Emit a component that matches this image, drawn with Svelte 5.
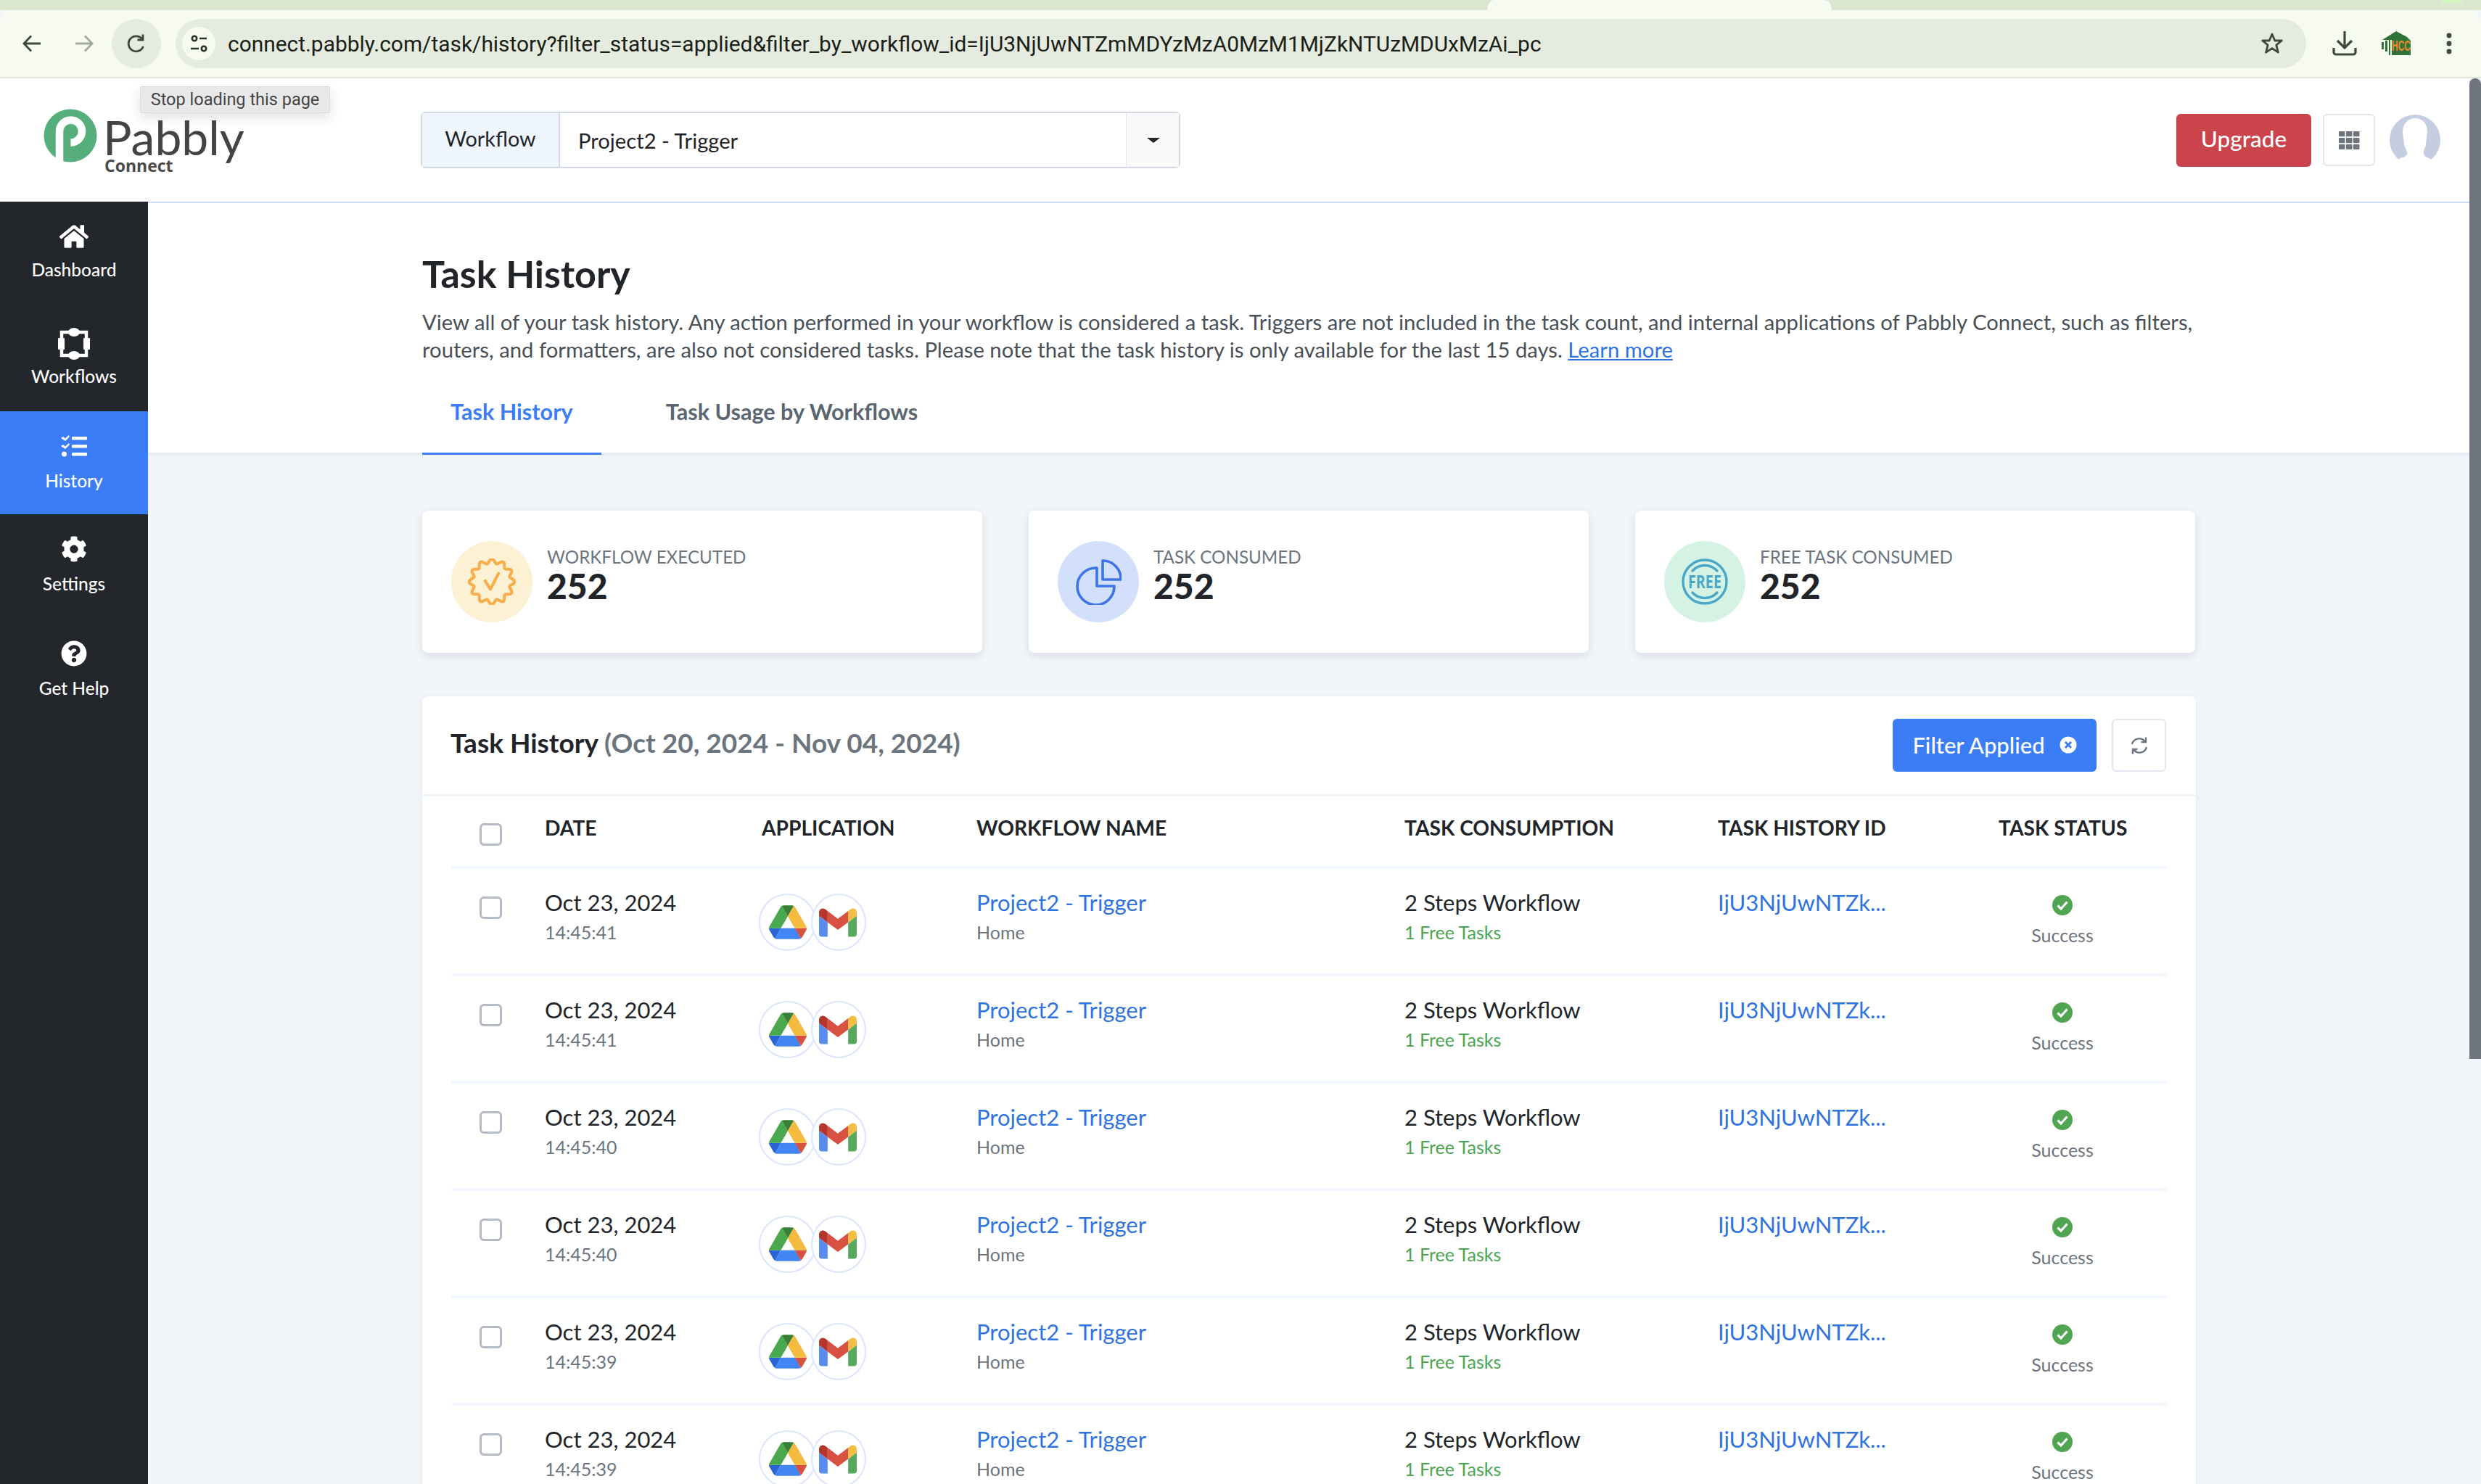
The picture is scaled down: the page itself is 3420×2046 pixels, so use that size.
<script>
  const rows = [
    `14:45:41`,
    `14:45:41`,
    `14:45:40`,
    `14:45:40`,
    `14:45:39`,
    `14:45:39`,
  ]

  const cards = [
    { label: `WORKFLOW EXECUTED`, value: `252`, kind: `badge` },
    { label: `TASK CONSUMED`, value: `252`, kind: `pie` },
    { label: `FREE TASK CONSUMED`, value: `252`, kind: `free` },
  ]

  const nav = [
    { label: `Dashboard`, icon: `home` },
    { label: `Workflows`, icon: `flow` },
    { label: `History`, icon: `tasks`, active: true },
    { label: `Settings`, icon: `cog` },
    { label: `Get Help`, icon: `help` },
  ]

  // wavy seal outline for the first card
  function seal(cx, cy, r, lobes, depth) {
    let d = ``
    const n = lobes * 8
    for (let i = 0; i <= n; i++) {
      const a = (i / n) * Math.PI * 2 - Math.PI / 2
      const rad = r + depth * Math.cos(lobes * a)
      d += `${i ? `L` : `M`}${(cx + rad * Math.cos(a)).toFixed(2)} ${(cy + rad * Math.sin(a)).toFixed(2)}`
    }
    return d + `Z`
  }
  const seal_path = seal(32, 31, 27.5, 12, 3)
</script>

<div class="window">
  <div class="tabstrip">
    <div class="active-tab"></div>
    <div class="tab-gap"></div>
    <div class="tab-dot"></div>
  </div>

  <div class="toolbar">
    <button class="tool" aria-label="back">
      <svg width="28" height="28" viewBox="0 0 28 28" fill="none" stroke="#3c4a38" stroke-width="2.8"><path d="M26 14H3M13 3.500 3 14l10 10.500"/></svg>
    </button>
    <button class="tool" aria-label="forward">
      <svg width="28" height="28" viewBox="0 0 28 28" fill="none" stroke="#a3aa9d" stroke-width="2.8"><path d="M2 14h23M15 3.500 25 14 15 24.500"/></svg>
    </button>
    <button class="tool reload" aria-label="reload">
      <svg width="30" height="30" viewBox="0 0 30 30" fill="none" stroke="#3c4a38" stroke-width="2.800"><path d="M24.500 19a10.500 10.500 0 1 1-1.800-10.500"/><path d="M24 2.500v7.500h-7.500" /></svg>
    </button>
    <div class="omnibox">
      <span class="tune">
        <svg width="26" height="26" viewBox="0 0 26 26" fill="none" stroke="#2b3428" stroke-width="2.600"><circle cx="7" cy="6" r="3.200"/><path d="M14 6h10M2 20h11"/><circle cx="20" cy="20" r="3.200"/></svg>
      </span>
      <span class="url">connect.pabbly.com/task/history?filter_status=applied&amp;filter_by_workflow_id=IjU3NjUwNTZmMDYzMzA0MzM1MjZkNTUzMDUxMzAi_pc</span>
      <svg class="star" width="32" height="32" viewBox="0 0 32 32" fill="none" stroke="#3c4a38" stroke-width="2.800" stroke-linejoin="round"><path d="m16 3 3.800 9h9.500l-7.500 6.200 2.600 10L16 22.600 7.600 28.200l2.600-10L2.700 12h9.500z"/></svg>
    </div>
    <div class="extras">
      <svg width="34" height="36" viewBox="0 0 34 36" fill="none" stroke="#3c4a38" stroke-width="3.200"><path d="M17 1v23M7 14l10 10 10-10"/><path d="M2 24v6a3 3 0 0 0 3 3h24a3 3 0 0 0 3-3v-6"/></svg>
      <svg class="hcc" width="42" height="36" viewBox="0 0 42 36" aria-label="HCC">
        <path d="M2 13 21 1l15 8 5 5v20H15V13z" fill="#2f7236"/>
        <path d="M1 16h3v10H1zM6 14h3v15H6zM11 13h2v21h-2z" fill="#2f7236"/>
        <text x="15" y="28" class="hcc-text" textLength="26" lengthAdjust="spacingAndGlyphs">HCC</text>
      </svg>
      <svg width="10" height="32" viewBox="0 0 10 32" fill="#3c4a38"><circle cx="5" cy="5" r="3.400"/><circle cx="5" cy="16" r="3.400"/><circle cx="5" cy="27" r="3.400"/></svg>
    </div>
  </div>

  <div class="viewport">
    <div class="page">
      <header class="appbar">
        <div class="logo">
          <svg width="74" height="74" viewBox="0 0 74 74">
            <circle cx="37" cy="37" r="36.500" fill="#55ae7c"/>
            <path d="M22 74V31a15.500 15.500 0 1 1 15.500 15.500" fill="none" stroke="#fff" stroke-width="10.500"/>
          </svg>
          <div class="wordmark">
            <span class="pabbly">Pabbly</span>
            <span class="connect">Connect</span>
          </div>
        </div>
        <div class="picker">
          <span class="picker-label">Workflow</span>
          <span class="picker-value">Project2 - Trigger</span>
          <span class="picker-caret"><i></i></span>
        </div>
        <div class="appbar-right">
          <button class="upgrade">Upgrade</button>
          <button class="apps" aria-label="apps">
            <svg width="29" height="25" viewBox="0 0 29 25" fill="#6f757e">
              {#each [0, 10, 20] as x}
                {#each [0, 9, 18] as y}
                  <rect {x} {y} width="8.500" height="7.200" rx="1"/>
                {/each}
              {/each}
            </svg>
          </button>
          <svg class="avatar" width="70" height="70" viewBox="0 0 70 70">
            <circle cx="35" cy="35" r="35" fill="#c5cde0"/>
            <path d="M11 64c2-6 12-4 13-10 1-5-4-8-4-14l-2-16C18 12 26 5 35 5c10 0 17 7 17 19l-2 16c0 6-4 9-3 14 1 6 10 5 12 10-8 5-19 7-30 6-8 0-15-2-18-6z" fill="#fff"/>
          </svg>
        </div>
      </header>

      <div class="body">
        <nav class="sidebar">
          {#each nav as item}
            <div class="nav-item" class:active={item.active}>
              <span class="nav-icon">
                {#if item.icon === `home`}
                  <svg width="42" height="36" viewBox="0 0 576 512" fill="#fff"><path d="M280.370 148.260L96 300.110V464a16 16 0 0 0 16 16l112.060-.29a16 16 0 0 0 15.920-16V368a16 16 0 0 1 16-16h64a16 16 0 0 1 16 16v95.640a16 16 0 0 0 16 16.050L464 480a16 16 0 0 0 16-16V300L295.670 148.260a12.190 12.190 0 0 0-15.300 0zM571.600 251.470L488 182.560V44.050a12 12 0 0 0-12-12h-56a12 12 0 0 0-12 12v72.610L318.470 43a48 48 0 0 0-61 0L4.340 251.470a12 12 0 0 0-1.600 16.900l25.500 31A12 12 0 0 0 45.150 301l235.220-193.740a12.190 12.190 0 0 1 15.300 0L530.900 301a12 12 0 0 0 16.900-1.600l25.500-31a12 12 0 0 0-1.700-16.930z"/></svg>
                {:else if item.icon === `flow`}
                  <svg width="44" height="44" viewBox="0 0 44 44"><rect x="5" y="6" width="34" height="32" fill="none" stroke="#fff" stroke-width="4.500"/><ellipse cx="22" cy="6" rx="8" ry="6" fill="#fff"/><ellipse cx="22" cy="38" rx="8" ry="6" fill="#fff"/><rect x="0" y="14" width="9" height="16" rx="1" fill="#fff"/><rect x="35" y="14" width="9" height="16" rx="1" fill="#fff"/></svg>
                {:else if item.icon === `tasks`}
                  <svg width="36" height="30" viewBox="0 0 36 30" fill="#fff"><path d="M0 4l3-2 3 2.500L10.500 0 12 2 6 8zM0 15l3-2 3 2.500L10.500 11 12 13l-6 6z"/><circle cx="4.500" cy="26" r="3.500"/><rect x="15" y="2" width="21" height="4.500" rx="1"/><rect x="15" y="13" width="21" height="4.500" rx="1"/><rect x="15" y="24" width="21" height="4.500" rx="1"/></svg>
                {:else if item.icon === `cog`}
                  <svg width="36" height="36" viewBox="0 0 512 512" fill="#fff"><path d="M487.400 315.700l-42.600-24.600c4.300-23.200 4.300-47 0-70.200l42.600-24.600c4.900-2.800 7.100-8.600 5.500-14-11.100-35.600-30-67.800-54.700-94.600-3.800-4.100-10-5.100-14.800-2.300L380.800 110c-17.900-15.400-38.500-27.300-60.800-35.100V25.800c0-5.600-3.900-10.500-9.400-11.700-36.700-8.200-74.300-7.800-109.200 0-5.500 1.200-9.400 6.100-9.400 11.700V75c-22.200 7.900-42.800 19.800-60.800 35.100L88.700 85.500c-4.900-2.800-11-1.900-14.800 2.300-24.700 26.700-43.600 58.900-54.700 94.600-1.700 5.400.6 11.200 5.500 14L67.300 221c-4.300 23.200-4.300 47 0 70.200l-42.600 24.600c-4.900 2.800-7.100 8.600-5.500 14 11.100 35.600 30 67.800 54.700 94.600 3.800 4.100 10 5.100 14.800 2.300l42.600-24.600c17.900 15.400 38.500 27.300 60.800 35.100v49.200c0 5.600 3.900 10.500 9.400 11.700 36.700 8.200 74.300 7.800 109.200 0 5.500-1.200 9.400-6.100 9.400-11.700v-49.200c22.200-7.900 42.800-19.800 60.800-35.100l42.600 24.600c4.900 2.800 11 1.900 14.800-2.300 24.700-26.700 43.600-58.900 54.700-94.600 1.500-5.500-.7-11.300-5.600-14.100zM256 336c-44.100 0-80-35.900-80-80s35.900-80 80-80 80 35.900 80 80-35.900 80-80 80z"/></svg>
                {:else}
                  <svg width="36" height="36" viewBox="0 0 512 512" fill="#fff"><path d="M504 256c0 136.997-111.043 248-248 248S8 392.997 8 256C8 119.083 119.043 8 256 8s248 111.083 248 248zM262.655 90c-54.497 0-89.255 22.957-116.549 63.758-3.536 5.286-2.353 12.415 2.715 16.258l34.699 26.310c5.205 3.947 12.621 3.008 16.665-2.122 17.864-22.658 30.113-35.797 57.303-35.797 20.429 0 45.698 13.148 45.698 32.958 0 14.976-12.363 22.667-32.534 33.976C247.128 238.528 216 254.941 216 296v4c0 6.627 5.373 12 12 12h56c6.627 0 12-5.373 12-12v-1.333c0-28.462 83.186-29.647 83.186-106.667 0-58.002-60.165-102-116.531-102zM256 338c-25.365 0-46 20.635-46 46 0 25.364 20.635 46 46 46s46-20.636 46-46c0-25.365-20.635-46-46-46z"/></svg>
                {/if}
              </span>
              <span class="nav-label">{item.label}</span>
            </div>
          {/each}
        </nav>

        <main class="content">
          <section class="intro">
            <h1>Task History</h1>
            <p>View all of your task history. Any action performed in your workflow is considered a task. Triggers are not included in the task count, and internal applications of Pabbly Connect, such as filters, routers, and formatters, are also not considered tasks. Please note that the task history is only available for the last 15 days. <a href="#top">Learn more</a></p>
            <div class="tabs">
              <span class="tab on">Task History</span>
              <span class="tab">Task Usage by Workflows</span>
            </div>
          </section>

          <section class="stage">
            <div class="cards">
              {#each cards as card}
                <div class="card">
                  <span class="bubble {card.kind}">
                    {#if card.kind === `badge`}
                      <svg width="66" height="64" viewBox="0 0 64 62" fill="none" stroke="#f8ae4a" stroke-width="4" stroke-linejoin="round" stroke-linecap="round">
                        <path d={seal_path}/>
                        <path d="M23 30l7 11 11-21"/>
                      </svg>
                    {:else if card.kind === `pie`}
                      <svg width="64" height="64" viewBox="0 0 64 64" fill="none" stroke="#3e74e5" stroke-width="3.600" stroke-linejoin="round">
                        <path d="M30 13a25.500 25.500 0 1 0 24 25H30z"/>
                        <path d="M38 3a25 25 0 0 1 25 26H38z"/>
                      </svg>
                    {:else}
                      <svg width="64" height="64" viewBox="0 0 64 64" fill="none" stroke="#4ba7c8" stroke-width="3.400" stroke-linecap="round">
                        <circle cx="32" cy="32" r="30"/>
                        <path d="M15 17a23 23 0 0 1 34 0M15 47a23 23 0 0 0 34 0"/>
                        <text x="9" y="41" class="free-text" textLength="46" lengthAdjust="spacingAndGlyphs">FREE</text>
                      </svg>
                    {/if}
                  </span>
                  <div class="card-text">
                    <span class="card-label">{card.label}</span>
                    <span class="card-value">{card.value}</span>
                  </div>
                </div>
              {/each}
            </div>

            <div class="panel">
              <div class="panel-head">
                <h2>Task History <span>(Oct 20, 2024 - Nov 04, 2024)</span></h2>
                <button class="filter">
                  Filter Applied
                  <svg width="24" height="24" viewBox="0 0 24 24"><circle cx="12" cy="12" r="11.500" fill="#fff"/><path d="M8 8l8 8M16 8l-8 8" stroke="#3b7cf7" stroke-width="3"/></svg>
                </button>
                <button class="refresh" aria-label="refresh">
                  <svg width="24" height="26" viewBox="0 0 24 26" fill="none" stroke="#6f757e" stroke-width="2.400"><path d="M2 11a10 9.500 0 0 1 18-3.500"/><path d="M21 1.500V8h-6.500"/><path d="M22 15a10 9.500 0 0 1-18 3.500"/><path d="M3 24.500V18h6.500"/></svg>
                </button>
              </div>

              <div class="grid head">
                <span class="cell-check"><i class="check"></i></span>
                <span>DATE</span>
                <span>APPLICATION</span>
                <span>WORKFLOW NAME</span>
                <span>TASK CONSUMPTION</span>
                <span>TASK HISTORY ID</span>
                <span class="center">TASK STATUS</span>
              </div>

              {#each rows as time}
                <div class="grid row">
                  <span class="cell-check"><i class="check"></i></span>
                  <div>
                    <div class="main-line">Oct 23, 2024</div>
                    <div class="sub-line">{time}</div>
                  </div>
                  <div class="apps-cell">
                    <span class="app-ring">
                      <svg width="52" height="47" viewBox="0 0 87.300 78">
                        <path d="m6.600 66.850 3.850 6.650c.8 1.400 1.950 2.500 3.300 3.300l13.750-23.800h-27.500c0 1.550.4 3.100 1.200 4.500z" fill="#2a64d3"/>
                        <path d="m43.650 25-13.750-23.800c-1.350.8-2.500 1.900-3.300 3.300l-25.400 44a9.060 9.060 0 0 0 -1.200 4.500h27.500z" fill="#4aa84f"/>
                        <path d="m73.550 76.800c1.350-.8 2.500-1.900 3.300-3.300l1.600-2.750 7.650-13.250c.8-1.400 1.200-2.950 1.200-4.500h-27.502l5.852 11.500z" fill="#d85140"/>
                        <path d="m43.650 25 13.750-23.800c-1.350-.8-2.900-1.200-4.500-1.200h-18.500c-1.600 0-3.150.45-4.500 1.200z" fill="#388035"/>
                        <path d="m59.800 53h-32.300l-13.750 23.800c1.350.8 2.900 1.200 4.500 1.200h50.800c1.600 0 3.150-.45 4.500-1.200z" fill="#4285f4"/>
                        <path d="m73.400 26.500-12.700-22c-.8-1.400-1.950-2.500-3.300-3.300l-13.750 23.800 16.150 28h27.450c0-1.550-.4-3.100-1.200-4.500z" fill="#f5bb3f"/>
                      </svg>
                    </span>
                    <span class="app-ring second">
                      <svg width="52" height="40" viewBox="52 42 88 66">
                        <path fill="#5a8cef" d="M58 108h14V74L52 59v43c0 3.320 2.690 6 6 6"/>
                        <path fill="#57a95e" d="M120 108h14c3.320 0 6-2.690 6-6V59l-20 15"/>
                        <path fill="#f3bf42" d="M120 48v26l20-15v-8c0-7.420-8.470-11.650-14.400-7.200"/>
                        <path fill="#d95142" d="M72 74V48l24 18 24-18v26L96 92"/>
                        <path fill="#b5352a" d="M52 51v8l20 15V48l-5.600-4.200c-5.940-4.450-14.400-.22-14.400 7.200"/>
                      </svg>
                    </span>
                  </div>
                  <div>
                    <div class="main-line link">Project2 - Trigger</div>
                    <div class="sub-line">Home</div>
                  </div>
                  <div>
                    <div class="main-line">2 Steps Workflow</div>
                    <div class="sub-line green">1 Free Tasks</div>
                  </div>
                  <div>
                    <div class="main-line link">IjU3NjUwNTZk...</div>
                  </div>
                  <div class="status">
                    <svg width="28" height="28" viewBox="0 0 28 28"><circle cx="14" cy="14" r="14" fill="#4fa552"/><path d="M7.500 14.500l4.500 4.500 8.500-9.500" fill="none" stroke="#fff" stroke-width="3.200"/></svg>
                    <span>Success</span>
                  </div>
                </div>
              {/each}
            </div>
          </section>
        </main>
      </div>
    </div>
    <div class="scrollbar"><div class="thumb"></div></div>
  </div>

  <div class="tooltip">Stop loading this page</div>
</div>

<style>
  :global(body) {
    margin: 0;
    background: #f2f6fa;
  }
  .window {
    position: relative;
    width: 3420px;
    height: 2046px;
    overflow: hidden;
    display: flex;
    flex-direction: column;
    font-family: Lato, "Liberation Sans", sans-serif;
    color: #212529;
  }
  button {
    font-family: inherit;
    border: 0;
    padding: 0;
    background: none;
  }

  /* browser chrome */
  .tabstrip {
    height: 14px;
    flex: none;
    display: flex;
    background: #dbe6cf;
  }
  .active-tab {
    width: 475px;
    margin-left: 2050px;
    background: #f7faf0;
    border-radius: 10px 10px 0 0 / 14px 14px 0 0;
  }
  .tab-gap {
    width: 840px;
  }
  .tab-dot {
    width: 30px;
    height: 4px;
    background: #d3f5c2;
    border-radius: 0 0 8px 8px;
  }
  .toolbar {
    height: 92px;
    flex: none;
    box-sizing: content-box;
    display: flex;
    align-items: center;
    background: #f7faf0;
    border-bottom: 2px solid #e1e5da;
    border-radius: 14px 14px 0 0 / 18px 18px 0 0;
    padding-left: 30px;
  }
  .tool {
    width: 28px;
    height: 68px;
    display: flex;
    align-items: center;
    justify-content: center;
    margin-right: 44px;
  }
  .tool.reload {
    width: 68px;
    margin-left: -20px;
    margin-right: 20px;
    border-radius: 50%;
    background: #e5ebdf;
  }
  .omnibox {
    width: 2937px;
    height: 68px;
    flex: none;
    display: flex;
    align-items: center;
    background: #e5ebdf;
    border-radius: 34px;
    padding-left: 9px;
    box-sizing: border-box;
  }
  .tune {
    width: 46px;
    height: 46px;
    border-radius: 50%;
    background: #f7faf0;
    display: flex;
    align-items: center;
    justify-content: center;
    flex: none;
  }
  .url {
    margin-left: 17px;
    flex: 1;
    font-family: Roboto, sans-serif;
    font-size: 29.9px;
    color: #1b2118;
    white-space: nowrap;
  }
  .star {
    margin-right: 31px;
    flex: none;
  }
  .extras {
    display: flex;
    align-items: center;
    margin-left: 36px;
  }
  .hcc {
    margin-left: 33px;
    margin-right: 47px;
  }
  .hcc-text {
    font-family: "Liberation Sans", sans-serif;
    font-weight: 700;
    font-size: 20px;
    fill: #ee8a2e;
  }

  /* app */
  .viewport {
    flex: 1;
    min-height: 0;
    display: flex;
    overflow: hidden;
  }
  .page {
    width: 3404px;
    flex: none;
    display: flex;
    flex-direction: column;
  }
  .scrollbar {
    width: 16px;
    flex: none;
    background: #f2f6fa;
  }
  .thumb {
    height: 1352px;
    background: #6f757e;
    border-radius: 8px 8px 0 0;
  }
  .appbar {
    height: 172px;
    flex: none;
    box-sizing: border-box;
    background: #fff;
    border-bottom: 2px solid #d5e2f8;
    display: flex;
    align-items: center;
    padding-left: 60px;
    padding-right: 40px;
  }
  .logo {
    width: 520px;
    display: flex;
    align-items: flex-start;
    height: 92px;
    margin-top: 6px;
  }
  .wordmark {
    display: flex;
    flex-direction: column;
    margin-left: 8px;
    margin-top: 7px;
  }
  .pabbly {
    font-family: Lato, sans-serif;
    font-weight: 400;
    font-size: 66px;
    line-height: 64px;
    color: #444;
  }
  .connect {
    font-family: "Open Sans", sans-serif;
    font-weight: 700;
    font-size: 23px;
    line-height: 22px;
    margin-top: -4px;
    margin-left: 2px;
    color: #4a4a4a;
  }
  .picker {
    width: 1047px;
    height: 78px;
    display: flex;
    align-items: stretch;
    border: 2px solid #d3d9e2;
    border-radius: 6px;
    box-sizing: border-box;
    font-size: 29.2px;
  }
  .picker-label {
    width: 190px;
    flex: none;
    box-sizing: border-box;
    background: #f0f6fd;
    border-right: 2px solid #d3d9e2;
    display: flex;
    align-items: center;
    justify-content: center;
    color: #212529;
    padding-bottom: 4px;
    font-size: 28.8px;
  }
  .picker-value {
    flex: 1;
    display: flex;
    align-items: center;
    padding-left: 25px;
  }
  .picker-caret {
    width: 70px;
    flex: none;
    background: #f9f9f9;
    border-left: 1px solid #e4e7ec;
    display: flex;
    align-items: center;
    justify-content: center;
    padding-left: 2px;
  }
  .picker-caret i {
    border: 9px solid transparent;
    border-top: 7px solid #212529;
    border-bottom: 0;
  }
  .appbar-right {
    margin-left: auto;
    display: flex;
    align-items: center;
  }
  .upgrade {
    width: 186px;
    height: 73px;
    background: #cc444b;
    color: #fff;
    border-radius: 6px;
    font-size: 31.5px;
    font-weight: 500;
    padding-bottom: 4px;
  }
  .apps {
    width: 72px;
    height: 72px;
    margin-left: 16px;
    border: 2px solid #e1e5ee;
    border-radius: 6px;
    box-sizing: border-box;
    display: flex;
    align-items: center;
    justify-content: center;
  }
  .avatar {
    margin-left: 20px;
  }
  .tooltip {
    position: absolute;
    left: 193px;
    top: 119px;
    width: 262px;
    height: 37px;
    box-sizing: border-box;
    background: #e8e8e8;
    border: 1px solid #dcdcdc;
    border-radius: 2px;
    box-shadow: 0 6px 16px rgba(0, 0, 0, 0.12);
    font-family: Roboto, sans-serif;
    font-size: 23.5px;
    line-height: 34px;
    text-align: center;
    color: #444;
  }

  .body {
    flex: 1;
    min-height: 0;
    display: flex;
  }
  .sidebar {
    width: 204px;
    flex: none;
    margin-top: -2px;
    background: #23262b;
    display: flex;
    flex-direction: column;
  }
  .nav-item {
    height: 143.5px;
    flex: none;
    display: flex;
    flex-direction: column;
    align-items: center;
    color: #fff;
    padding-top: 27px;
    box-sizing: border-box;
  }
  .nav-item:first-child {
    height: 145px;
  }
  .nav-item:first-child .nav-label {
    margin-top: 9px;
  }
  .nav-item:nth-child(2) {
    height: 144px;
  }
  .nav-item:nth-child(2) .nav-icon {
    margin-top: 3px;
    margin-bottom: -3px;
  }
  .nav-item.active {
    height: 142px;
    background: #3b7cf7;
  }
  .nav-icon {
    height: 42px;
    display: flex;
    align-items: center;
    justify-content: center;
  }
  .nav-label {
    margin-top: 11px;
    font-size: 24.5px;
    font-weight: 500;
    line-height: 32px;
  }

  .content {
    flex: 1;
    min-width: 0;
    background: #f2f6fa;
    display: flex;
    flex-direction: column;
  }
  .intro {
    height: 344px;
    flex: none;
    box-sizing: border-box;
    background: #fff;
    padding: 67px 0 0 378px;
    box-shadow: 0 2px 6px rgba(60, 80, 120, 0.12);
  }
  h1 {
    margin: 0;
    font-size: 52px;
    line-height: 60px;
    font-weight: 700;
    color: #212529;
  }
  .intro p {
    margin: 18px 0 0;
    width: 2450px;
    font-size: 29.25px;
    line-height: 38px;
    color: #495057;
  }
  .intro a {
    color: #2f73e0;
  }
  .tabs {
    display: flex;
    margin-top: 39px;
  }
  .tab {
    height: 87px;
    box-sizing: border-box;
    padding: 0 39px;
    font-size: 30.6px;
    line-height: 56px;
    font-weight: 700;
    color: #5a6570;
    margin-right: 10px;
  }
  .tab.on {
    color: #3b7cf7;
    border-bottom: 3px solid #3b7cf7;
    margin-right: 50px;
  }

  .stage {
    padding: 80px 377px 0 378px;
  }
  .cards {
    display: grid;
    grid-template-columns: repeat(3, 772px);
    column-gap: 64px;
  }
  .card {
    height: 196px;
    background: #fff;
    border-radius: 8px;
    box-shadow: 0 4px 12px rgba(70, 80, 100, 0.16);
    display: flex;
    align-items: center;
    padding-left: 40px;
    box-sizing: border-box;
  }
  .bubble {
    width: 112px;
    height: 112px;
    border-radius: 50%;
    flex: none;
    display: flex;
    align-items: center;
    justify-content: center;
  }
  .bubble.badge {
    background: #fdf1d3;
  }
  .bubble.pie {
    background: #d3e0fc;
  }
  .bubble.free {
    background: #d5f3e4;
  }
  .free-text {
    font-family: "Open Sans", sans-serif;
    font-weight: 700;
    font-size: 25px;
    fill: #4ba7c8;
    stroke: none;
  }
  .card-text {
    display: flex;
    flex-direction: column;
    margin-left: 20px;
    margin-bottom: 18px;
  }
  .card-label {
    font-size: 24.2px;
    line-height: 30px;
    color: #6c757d;
  }
  .card-value {
    font-size: 48px;
    line-height: 50px;
    font-weight: 900;
    color: #212529;
  }

  .panel {
    margin-top: 60px;
    background: #fff;
    border-radius: 8px 8px 0 0;
    box-shadow: 0 2px 8px rgba(70, 80, 100, 0.08);
    padding: 0 40px;
  }
  .panel-head {
    height: 138px;
    margin: 0 -40px;
    padding: 0 41px 0 39px;
    box-sizing: border-box;
    border-bottom: 3px solid #f0f4fb;
    display: flex;
    align-items: center;
  }
  h2 {
    margin: 0;
    flex: 1;
    font-size: 37px;
    font-weight: 700;
    color: #212529;
    padding-bottom: 8px;
  }
  h2 span {
    font-weight: 700;
    color: #6c757d;
  }
  .filter {
    width: 281px;
    height: 73px;
    background: #3b7cf7;
    color: #fff;
    border-radius: 6px;
    font-size: 31px;
    font-weight: 500;
    display: flex;
    align-items: center;
    justify-content: center;
    gap: 20px;
    padding-bottom: 2px;
  }
  .refresh {
    width: 75px;
    height: 73px;
    margin-left: 21px;
    border: 2px solid #e1e5ee;
    border-radius: 6px;
    box-sizing: border-box;
    display: flex;
    align-items: center;
    justify-content: center;
  }
  .grid {
    display: grid;
    grid-template-columns: 129px 299px 296px 590px 432px 387px 176px;
    border-bottom: 4px solid #f2f6fe;
    box-sizing: border-box;
  }
  .grid.head {
    height: 100px;
    align-items: center;
    font-size: 28.2px;
    font-weight: 700;
    color: #212529;
    padding-bottom: 10px;
  }
  .grid.row {
    height: 148px;
    padding-top: 27px;
  }
  .center {
    text-align: center;
    white-space: nowrap;
  }
  .cell-check {
    padding-left: 39px;
  }
  .head .cell-check {
    padding-top: 19px;
  }
  .row .cell-check {
    padding-top: 11px;
  }
  .check {
    display: block;
    width: 31px;
    height: 31px;
    box-sizing: border-box;
    border: 3px solid #b5bbc5;
    border-radius: 6px;
  }
  .main-line {
    font-size: 31px;
    line-height: 38px;
    color: #212529;
  }
  .sub-line {
    margin-top: 5px;
    font-size: 25px;
    line-height: 34px;
    color: #6c757d;
  }
  .link {
    color: #2f73e0;
  }
  .green {
    color: #4aa54f;
  }
  .apps-cell {
    display: flex;
    margin-left: -4px;
    margin-top: 7px;
  }
  .app-ring {
    width: 79px;
    height: 79px;
    border: 2px solid #dbe5fb;
    border-radius: 50%;
    box-sizing: border-box;
    display: flex;
    align-items: center;
    justify-content: center;
    background: #fff;
    flex: none;
  }
  .app-ring.second {
    margin-left: -7px;
    width: 76px;
    padding-right: 2px;
  }
  .status {
    display: flex;
    flex-direction: column;
    align-items: center;
    font-size: 25px;
    color: #6c757d;
    gap: 12px;
    padding-top: 9px;
  }
</style>
